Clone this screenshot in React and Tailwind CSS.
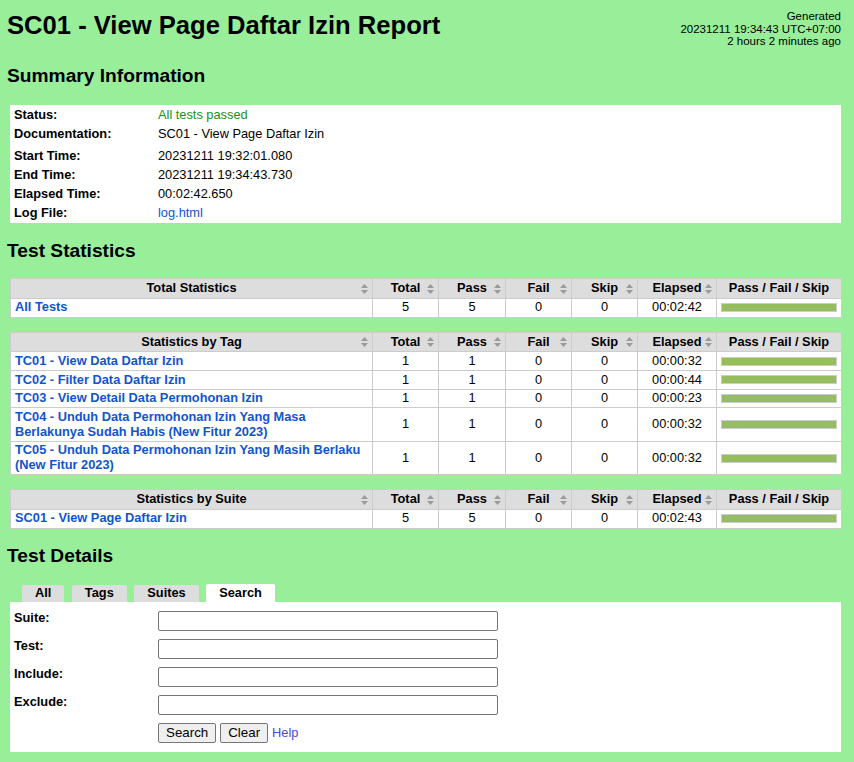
import React from 'react'

const summary = [
  { label: 'Status:', value: 'All tests passed', cls: 'text-[#1a8f1a]' },
  { label: 'Documentation:', value: 'SC01 - View Page Daftar Izin', doc: true },
  { label: 'Start Time:', value: '20231211 19:32:01.080' },
  { label: 'End Time:', value: '20231211 19:34:43.730' },
  { label: 'Elapsed Time:', value: '00:02:42.650' },
  { label: 'Log File:', value: 'log.html', cls: 'text-[#1155cc]' },
]

const tagRows = [
  { name: ['TC01 - View Data Daftar Izin'], elapsed: '00:00:32' },
  { name: ['TC02 - Filter Data Daftar Izin'], elapsed: '00:00:44' },
  { name: ['TC03 - View Detail Data Permohonan Izin'], elapsed: '00:00:23' },
  { name: ['TC04 - Unduh Data Permohonan Izin Yang Masa', 'Berlakunya Sudah Habis (New Fitur 2023)'], elapsed: '00:00:32' },
  { name: ['TC05 - Unduh Data Permohonan Izin Yang Masih Berlaku', '(New Fitur 2023)'], elapsed: '00:00:32' },
]

function SortIcon() {
  return (
    <svg width="7" height="10" viewBox="0 0 7 10" className="absolute right-[4px] top-1/2 -translate-y-1/2">
      <polygon points="0,4 3.5,0 7,4" fill="#9a9a9a" />
      <polygon points="0,6 3.5,10 7,6" fill="#9a9a9a" />
    </svg>
  )
}

function Th({ children, sort = true }) {
  return (
    <th className="relative bg-[#dddddd] border border-[#cccccc] px-[4px] py-[2px] font-bold text-center">
      {children}
      {sort && <SortIcon />}
    </th>
  )
}

function StatTable({ title, rows }) {
  return (
    <table className="table-fixed border-collapse w-[831px] ml-[3px] bg-white leading-[14.7px]">
      <colgroup>
        <col className="w-[362px]" />
        <col className="w-[66px]" />
        <col className="w-[67px]" />
        <col className="w-[66px]" />
        <col className="w-[66px]" />
        <col className="w-[79px]" />
        <col className="w-[125px]" />
      </colgroup>
      <thead>
        <tr>
          <Th>{title}</Th>
          <Th>Total</Th>
          <Th>Pass</Th>
          <Th>Fail</Th>
          <Th>Skip</Th>
          <Th>Elapsed</Th>
          <Th sort={false}>Pass / Fail / Skip</Th>
        </tr>
      </thead>
      <tbody>
        {rows.map((r, i) => (
          <tr key={i}>
            <td className="border border-[#cccccc] px-[4px] py-[1.5px] font-bold text-[#1155cc]">
              {r.name.map((n, j) => (
                <React.Fragment key={j}>
                  {j > 0 && <br />}
                  {n}
                </React.Fragment>
              ))}
            </td>
            <td className="border border-[#cccccc] py-[1.5px] text-center">{r.total}</td>
            <td className="border border-[#cccccc] py-[1.5px] text-center">{r.pass}</td>
            <td className="border border-[#cccccc] py-[1.5px] text-center">0</td>
            <td className="border border-[#cccccc] py-[1.5px] text-center">0</td>
            <td className="border border-[#cccccc] py-[1.5px] text-center">{r.elapsed}</td>
            <td className="border border-[#cccccc] px-[4px] py-[1.5px]">
              <div className="h-[9px] border border-[#cccccc] bg-[#97bd61]" />
            </td>
          </tr>
        ))}
      </tbody>
    </table>
  )
}

export default function App() {
  return (
    <div className="min-h-screen bg-[#99ee99] pl-[7px] pr-[13px] pb-[10px] font-['Liberation_Sans',Arial,sans-serif] text-[12.8px] text-black">
      <div className="flex justify-between items-start pt-[10px]">
        <h1 className="text-[25.6px] font-bold leading-[30px]">SC01 - View Page Daftar Izin Report</h1>
        <div className="text-right text-[11.5px] leading-[12.5px]">
          <div>Generated</div>
          <div>20231211 19:34:43 UTC+07:00</div>
          <div>2 hours 2 minutes ago</div>
        </div>
      </div>

      <h2 className="mt-[16px] text-[19.2px] font-bold leading-[24px]">Summary Information</h2>
      <div className="mt-[17.5px] ml-[3px] w-[831px] bg-white py-[1px]">
        <table className="table-fixed border-collapse w-full leading-[14.7px]">
          <colgroup>
            <col className="w-[144px]" />
            <col />
          </colgroup>
          <tbody>
            {summary.map(s => (
              <tr key={s.label}>
                <th className={`text-left align-top font-bold px-[4px] pt-[2px] ${s.doc ? 'pb-[6px]' : 'pb-[2px]'}`}>{s.label}</th>
                <td className={`align-top px-[4px] pt-[2px] ${s.doc ? 'pb-[6px]' : 'pb-[2px]'} ${s.cls || ''}`}>{s.value}</td>
              </tr>
            ))}
          </tbody>
        </table>
      </div>

      <h2 className="mt-[15.5px] text-[19.2px] font-bold leading-[24px]">Test Statistics</h2>
      <div className="mt-[15.5px]">
        <StatTable title="Total Statistics" rows={[{ name: ['All Tests'], total: 5, pass: 5, elapsed: '00:02:42' }]} />
      </div>
      <div className="mt-[14px]">
        <StatTable title="Statistics by Tag" rows={tagRows.map(r => ({ ...r, total: 1, pass: 1 }))} />
      </div>
      <div className="mt-[14px]">
        <StatTable title="Statistics by Suite" rows={[{ name: ['SC01 - View Page Daftar Izin'], total: 5, pass: 5, elapsed: '00:02:43' }]} />
      </div>

      <h2 className="mt-[15.5px] text-[19.2px] font-bold leading-[24px]">Test Details</h2>
      <div className="mt-[16px] ml-[3px] w-[831px]">
        <div className="flex items-end gap-[7.5px] pl-[12px] font-bold leading-[14.7px]">
          <div className="bg-[#dddddd] px-[13px] py-[1px] rounded-t-[2px]">All</div>
          <div className="bg-[#dddddd] px-[13px] py-[1px] rounded-t-[2px]">Tags</div>
          <div className="bg-[#dddddd] px-[13px] py-[1px] rounded-t-[2px]">Suites</div>
          <div className="bg-white px-[13px] pt-[2px] pb-[1px] rounded-t-[2px]">Search</div>
        </div>
        <div className="bg-white py-[5px]">
          <table className="table-fixed border-collapse leading-[14.7px]">
            <colgroup>
              <col className="w-[144px]" />
              <col />
            </colgroup>
            <tbody>
              {['Suite:', 'Test:', 'Include:', 'Exclude:'].map(l => (
                <tr key={l}>
                  <th className="text-left align-top font-bold px-[4px] py-[4px]">{l}</th>
                  <td className="px-[4px] py-[4px]">
                    <input type="text" className="block w-[340px] h-[20px] bg-white border border-[#767676] rounded-[2px]" />
                  </td>
                </tr>
              ))}
              <tr>
                <th />
                <td className="px-[4px] py-[4px]">
                  <div className="flex items-center gap-[4px] text-[13.33px]">
                    <button className="h-[20px] px-[7px] bg-[#efefef] border border-[#767676] rounded-[2px] leading-none">Search</button>
                    <button className="h-[20px] px-[7px] bg-[#efefef] border border-[#767676] rounded-[2px] leading-none">Clear</button>
                    <span className="text-[12.8px] text-[#4a48d8]">Help</span>
                  </div>
                </td>
              </tr>
            </tbody>
          </table>
        </div>
      </div>
    </div>
  )
}
